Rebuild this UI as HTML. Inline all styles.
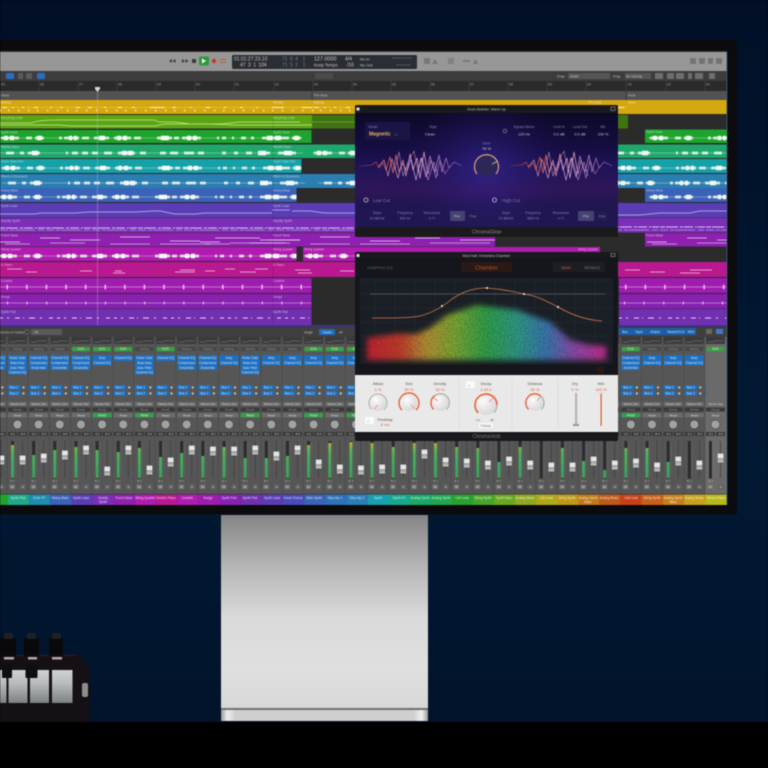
<!DOCTYPE html>
<html><head><meta charset="utf-8"><title>Logic Pro mixer on display</title>
<style>
html,body{margin:0;padding:0;background:#000;width:768px;height:768px;overflow:hidden}
svg#r{display:block;filter:blur(.55px);font-family:"Liberation Sans",sans-serif}
.t{fill:#fff;fill-opacity:.6;font-size:3.2px}
.d{fill:#ddd;font-size:3px;text-anchor:middle}
.l{fill:#fff;fill-opacity:.8;font-size:3.2px;text-anchor:middle}
.o{fill:#e8603a;font-size:4px;text-anchor:middle}
.pg{fill:#8583ae;font-size:3.3px;text-anchor:middle}
.pw{fill:#c9c3e8;font-size:3.8px;text-anchor:middle}
</style></head><body>
<svg id="r" xmlns="http://www.w3.org/2000/svg" width="768" height="768" viewBox="0 0 768 768">
<defs>
<linearGradient id="bg" x1="0" y1="0" x2="0" y2="1"><stop offset="0" stop-color="#011027"/><stop offset=".6" stop-color="#021933"/><stop offset="1" stop-color="#01132a"/></linearGradient>
<linearGradient id="st" x1="0" y1="0" x2="0" y2="1"><stop offset="0" stop-color="#858585"/><stop offset=".27" stop-color="#b6b6b6"/><stop offset=".53" stop-color="#dadada"/><stop offset=".8" stop-color="#dfdfdf"/><stop offset="1" stop-color="#d8d8d8"/></linearGradient>
<linearGradient id="band" x1="0" y1="0" x2="1" y2="0"><stop offset="0" stop-color="#999"/><stop offset=".03" stop-color="#eee"/><stop offset=".07" stop-color="#cfcfcf"/><stop offset=".93" stop-color="#cfcfcf"/><stop offset=".97" stop-color="#f2f2f2"/><stop offset="1" stop-color="#999"/></linearGradient>
<linearGradient id="mt" gradientUnits="userSpaceOnUse" x1="0" y1="442" x2="0" y2="478"><stop offset="0" stop-color="#b8b038"/><stop offset=".3" stop-color="#4cb05c"/><stop offset="1" stop-color="#3ca05c"/></linearGradient>
<linearGradient id="fd" x1="0" y1="0" x2="0" y2="1"><stop offset="0" stop-color="#d8d8d8"/><stop offset=".45" stop-color="#f0f0f0"/><stop offset=".55" stop-color="#9a9a9a"/><stop offset="1" stop-color="#cacaca"/></linearGradient>
<linearGradient id="pp" x1="0" y1="0" x2="0" y2="1"><stop offset="0" stop-color="#0c0926"/><stop offset=".3" stop-color="#150e42"/><stop offset=".5" stop-color="#211459"/><stop offset=".68" stop-color="#2e1658"/><stop offset=".8" stop-color="#211550"/><stop offset="1" stop-color="#1f1852"/></linearGradient>
<radialGradient id="pr" gradientUnits="userSpaceOnUse" cx="486" cy="168" r="80"><stop offset="0" stop-color="#3c2aa8" stop-opacity=".55"/><stop offset="1" stop-color="#2a1868" stop-opacity="0"/></radialGradient>
<linearGradient id="wg" gradientUnits="userSpaceOnUse" x1="360" y1="0" x2="462" y2="0"><stop offset="0" stop-color="#5a2d50"/><stop offset=".3" stop-color="#d85a4a"/><stop offset=".6" stop-color="#e098b8"/><stop offset="1" stop-color="#6a48a8"/></linearGradient>
<linearGradient id="wh" gradientUnits="userSpaceOnUse" x1="360" y1="0" x2="462" y2="0"><stop offset="0" stop-color="#d85a4a"/><stop offset=".5" stop-color="#d0a8e0"/><stop offset="1" stop-color="#8a4090"/></linearGradient>
<linearGradient id="rb" gradientUnits="userSpaceOnUse" x1="367" y1="0" x2="606" y2="0"><stop offset="0" stop-color="#cc2030"/><stop offset=".14" stop-color="#c83c2a"/><stop offset=".25" stop-color="#b89530"/><stop offset=".36" stop-color="#80aa30"/><stop offset=".5" stop-color="#2ea348"/><stop offset=".63" stop-color="#2e9c88"/><stop offset=".75" stop-color="#3878b4"/><stop offset=".86" stop-color="#884cac"/><stop offset="1" stop-color="#cc2890"/></linearGradient>
<linearGradient id="ky" x1="0" y1="0" x2="0" y2="1"><stop offset="0" stop-color="#cfd3d3"/><stop offset=".4" stop-color="#b8bcbc"/><stop offset="1" stop-color="#7c8282"/></linearGradient>
<radialGradient id="kn" cx=".35" cy=".3" r=".8"><stop offset="0" stop-color="#fbfbfb"/><stop offset="1" stop-color="#d4d4d4"/></radialGradient>
<filter id="sp" x="-10%" y="-15%" width="120%" height="130%"><feGaussianBlur in="SourceGraphic" stdDeviation="3" result="b"/><feTurbulence type="fractalNoise" baseFrequency="1.1" numOctaves="2" seed="4" result="n"/><feColorMatrix in="n" type="matrix" values="0 0 0 0 0 0 0 0 0 0 0 0 0 0 0 0 0 0 -2.2 2.05" result="a"/><feComposite in="b" in2="a" operator="in"/></filter>

<g id="wv" fill="none">
<path d="M0 0H303" stroke="#e9f5ea" stroke-width=".6" stroke-opacity=".7"/>
<path d="M2 0H20M27 0H33M36 0H45M60 0H63M65 0H80M83 0H90M95 0H110M115 0H132M135 0H142M158 0H173M175 0H180M183 0H202M218 0H220M223 0H227M233 0H235M242 0H247M252 0H255M263 0H290M293 0H302" stroke="#e6f3e8" stroke-opacity=".9" stroke-width="2.800"/>
<path d="M5 0H9M11 0H15M38 0H43M70 0H73M75 0H78M100 0H106M118 0H122M124 0H128M162 0H170M188 0H192M194 0H198M268 0H274M276 0H282M295 0H300" stroke="#f4fbf5" stroke-width="4.400"/>
</g>
<g id="wv2" fill="none">
<path d="M0 0H303" stroke="#eee" stroke-width=".6" stroke-opacity=".7"/>
<path d="M6 0H14M20 0H24M28 0H40M66 0H68M72 0H78M82 0H88M92 0H98M104 0H112M118 0H135M140 0H146M160 0H166M170 0H178M184 0H194M198 0H204M222 0H226M234 0H238M246 0H252M258 0H270M278 0H296" stroke="#eef3fa" stroke-opacity=".9" stroke-width="2.800"/>
<path d="M32 0H38M122 0H127M128 0H133M258 0H266M284 0H292" stroke="#f8f8ff" stroke-width="4.400"/>
</g>
<g id="yl" fill="none" stroke="#fff3c8">
<path d="M0 0H315" stroke-width=".5" stroke-opacity=".5"/>
<path d="M2 0H7M12 0H14M22 0H24M34 0H38M50 0H52M60 0H63M76 0H80M88 0H92M104 0H106M118 0H122M132 0H135M150 0H165M172 0H176M190 0H192M206 0H210M224 0H226M240 0H243M256 0H258M272 0H284M302 0H312" stroke-width="1"/>
<path d="M0 3h1.300M8 3h1.300M18 3h1.300M28 3h1.300M37 3h1.300M47 3h1.300M57 3h1.300M67 3h1.300M76 3h1.300M86 3h1.300M96 3h1.300M106 3h1.300M116 3h1.300M125 3h1.300M135 3h1.300M145 3h1.300M155 3h1.300M165 3h1.300M174 3h1.300M184 3h1.300M194 3h1.300M204 3h1.300M214 3h1.300M223 3h1.300M233 3h1.300M243 3h1.300M253 3h1.300M263 3h1.300M272 3h1.300M282 3h1.300M292 3h1.300M302 3h1.300" stroke-width="1.600"/>
</g>
<g id="md" fill="none" stroke="#e6d8f5" stroke-width=".7">
<path d="M0 2H20M40 -2H60M70 0H100M120 -3H150M170 1H200M215 -2H240M260 0H300"/>
<path d="M5 4H30M50 3H85M110 4H150M160 4H210M230 3H290" stroke-opacity=".8"/>
</g>
<g id="f"><rect x="2.200" y="-4.500" width="5.800" height="9" rx=".6" fill="url(#fd)"/></g>

<g id="s">
<rect x="-9.500" y="337" width="19" height="7" fill="#3a3a3a"/><path d="M-8 342H-3Q0 340 3 341H8" stroke="#9a9a9a" stroke-width=".4" fill="none"/>
<rect x="-9" y="347" width="18" height="4" rx=".5" fill="#474747"/><text class="d" y="350" fill-opacity=".5">Setting</text>
<rect x="-10" y="385" width="13" height="4.600" rx=".6" fill="#1f6fc0"/><rect x="-10" y="391" width="13" height="4.600" rx=".6" fill="#1f6fc0"/>
<text class="l" x="-3.500" y="388.400">Bus 1</text><text class="l" x="-3.500" y="394.400">Bus 2</text>
<circle cx="6" cy="387.500" r="1.200" fill="#bbb"/><circle cx="6" cy="393.500" r="1.200" fill="#bbb"/>
<rect x="-9.500" y="402" width="19" height="4" fill="#6b6b6b"/><text class="d" y="405">Stereo Out</text>
<rect x="-9.500" y="407.500" width="19" height="4" fill="#3a3a3a"/><text class="d" y="410.500" fill-opacity=".6">Group</text>
<rect x="-9.500" y="413" width="19" height="4.400" fill="#6c6c6c"/><text class="d" y="416.300">Read</text>
<circle cy="424.500" r="4" fill="#a2a2a2"/><circle cy="424.500" r="4.600" fill="none" stroke="#444" stroke-width=".5"/>
<rect x="-9.500" y="432" width="9" height="4" fill="#383838"/><rect x=".5" y="432" width="9" height="4" fill="#383838"/>
<text class="d" x="-5" y="435">-3.1</text><text class="d" x="5" y="435">-9.4</text>
<rect x="-6.500" y="441" width="3" height="37.500" fill="#2c2c2c"/>
<path d="M-2.200 443v34" stroke="#8c8c8c" stroke-width="1" stroke-dasharray=".4 1.600"/>
<rect x="4.700" y="441" width=".7" height="37" fill="#3c3c3c"/>
<text class="d" x="-5" y="482">II .I</text>
<rect x="-8" y="484.500" width="5.500" height="4.500" rx=".5" fill="#767676"/><rect x="2.500" y="484.500" width="5.500" height="4.500" rx=".5" fill="#626262"/>
<text class="d" x="-5.200" y="488">M</text><text class="d" x="5.200" y="488">S</text>
<path d="M-10.500 337V494" stroke="#474747" stroke-width=".5"/>
</g>
<g id="p1"><rect x="-9.500" y="355" width="19" height="6" rx=".5" fill="#1f6fc0"/><text class="l" y="359">Channel EQ</text></g>
<g id="p2"><rect x="-9.500" y="355" width="19" height="10.500" rx=".5" fill="#1f6fc0"/><text class="l" y="359">Amp</text><text class="l" y="364">Channel EQ</text></g>
<g id="p3"><rect x="-9.500" y="355" width="19" height="15" rx=".5" fill="#1f6fc0"/><text class="l" y="359">Channel EQ</text><text class="l" y="364">Compressor</text><text class="l" y="369">Ensemble</text></g>
<g id="p4"><rect x="-9.500" y="355" width="19" height="19.500" rx=".5" fill="#1f6fc0"/><text class="l" y="359">Noise Gate</text><text class="l" y="364">Bass Amp</text><text class="l" y="369">Auto Filter</text><text class="l" y="373.500">Channel EQ</text></g>
<g id="gt"><rect x="-9" y="347" width="18" height="4.200" rx=".5" fill="#3aa144"/><text class="l" y="350.200">EXS</text></g>
<g id="gr"><rect x="-9.500" y="413" width="19" height="4.400" fill="#34a04a"/><text class="l" y="416.300">Read</text></g>
</defs>

<rect width="768" height="768" fill="url(#bg)"/>
<!-- stand -->
<rect x="221" y="515" width="207" height="193" fill="url(#st)"/>
<rect x="221" y="708" width="207" height="2" fill="#6f6f6f"/>
<rect x="221" y="710" width="207" height="11" fill="url(#band)"/>
<rect y="722" width="768" height="46" fill="#000"/>
<!-- keyboard -->
<g>
<path d="M0 655H78Q90 660 90 682V722H0Z" fill="#141016"/>
<path d="M0 655.500H76" stroke="#35182a" stroke-width="1.200"/>
<rect x="0" y="638" width="16" height="18" fill="#09090b"/><rect x="24" y="638" width="15" height="18" fill="#09090b"/><rect x="49" y="638" width="14" height="18" fill="#09090b"/>
<rect x="4" y="633" width="9" height="6" rx="1.500" fill="#202024"/><rect x="27" y="633" width="9" height="6" rx="1.500" fill="#202024"/><rect x="52" y="633" width="9" height="6" rx="1.500" fill="#202024"/>
<rect x="4" y="657" width="10" height="2.500" fill="#b8a4aa"/><rect x="28" y="657" width="9" height="2.500" fill="#b8a4aa"/><rect x="52" y="657" width="10" height="2.500" fill="#b8a4aa"/>
<rect x="0" y="670" width="6.500" height="33" fill="url(#ky)"/><rect x="8.500" y="670" width="19" height="33" fill="url(#ky)"/><rect x="30" y="670" width="19" height="33" fill="url(#ky)"/><rect x="52" y="670" width="20.500" height="33" fill="url(#ky)"/>
<rect x="2" y="664" width="10" height="14" rx="1" fill="#0e0e10"/><rect x="25.500" y="664" width="12" height="14" rx="1" fill="#0e0e10"/>
<rect x="82" y="683" width="6" height="14" rx="2" fill="#8f8f8a"/>
</g>

<!-- monitor -->
<rect x="-2" y="40" width="739" height="474.500" fill="#0b0b0d"/>
<rect x="0" y="51" width="727" height="1" fill="#3a3a3a"/>
<rect x="0" y="52" width="727" height="453" fill="#2c2c2c"/>
<rect x="726.400" y="52" width=".9" height="453" fill="#4a7ab0" fill-opacity=".7"/>

<!-- toolbar -->
<rect y="52" width="726.500" height="19" fill="#979797"/>
<g fill="#3c3c3c">
<path d="M172 59v4l-3-2zM175.500 59v4l-3-2z"/><path d="M182 59v4l3-2zM185.500 59v4l3-2z"/><rect x="192" y="59" width="4" height="4"/>
</g>
<rect x="199" y="56.500" width="10" height="9" rx="2" fill="#2c9a3a"/><path d="M202 58.500v5l4-2.500z" fill="#fff"/>
<circle cx="214" cy="61" r="2.200" fill="#c9382c"/>
<path d="M220 59.500h6M220 62.500h6" stroke="#b8602a" stroke-width=".9"/>
<rect x="232" y="55" width="185" height="14" rx="1.500" fill="#2a2d33"/>
<g fill="#c9c9c9" font-size="5">
<text x="234" y="60.500">01:01:27:23.10</text><text x="240" y="66.500">47&#8201; 3&#8201; 1&#8201; 104</text>
<text x="282" y="60.500" fill-opacity=".5">71&#8201; 5&#8201; 4&#8201; &#8201; 1</text><text x="282" y="66.500" fill-opacity=".5">71&#8201; 5&#8201; 2&#8201; &#8201; 1</text>
<text x="314" y="60.500" font-size="5.400">127.0000</text><text x="314" y="66.500" font-size="4.200">Keep Tempo</text>
<text x="345" y="60.500">4/4</text><text x="347" y="66.500">/16</text>
<text x="360" y="60.500" font-size="4">No In</text><text x="360" y="66.500" font-size="4">No Out</text>
</g>
<path d="M392 58h20M396 65h14" stroke="#777" stroke-width=".7" stroke-dasharray="2 1"/>
<g fill="#777"><rect x="424" y="58" width="6" height="6" rx="1"/><path d="M432 64l3-5 3 5z"/><rect x="448" y="58" width="6" height="6" fill-opacity=".7"/><rect x="463" y="60" width="7" height="2"/><path d="M473 64l2.500-5 2.500 5z"/></g>
<g fill="#747474"><rect x="690" y="58" width="6" height="6"/><rect x="699" y="58" width="6" height="6"/><rect x="708" y="58" width="5" height="6"/><rect x="716" y="58" width="6" height="6"/></g>

<!-- control bar -->
<rect y="71" width="726.500" height="10" fill="#3c3c3c"/>
<rect x="6" y="73" width="8" height="6" rx="1" fill="#2a6ec0"/><rect x="18" y="73" width="5" height="6" fill="#5a5a5a"/><rect x="26" y="73" width="6" height="6" fill="#5a5a5a"/><rect x="37" y="73" width="8" height="6" rx="1" fill="#2a6ec0"/>
<rect x="315" y="73" width="18" height="6" rx="1" fill="#4a4a4a"/>
<text class="t" x="557" y="77.500">Snap:</text><rect x="568" y="73" width="42" height="6" fill="#555"/><text class="t" x="570" y="77.500">Smart</text>
<text class="t" x="613" y="77.500">Drag:</text><rect x="625" y="73" width="26" height="6" fill="#555"/><text class="t" x="626" y="77.500">No Overlap</text>
<g fill="#6e6e6e"><rect x="655" y="73" width="8" height="6"/><rect x="667" y="73" width="7" height="6"/><rect x="676" y="73" width="8" height="6"/><rect x="688" y="73" width="4" height="6"/><rect x="695" y="73" width="8" height="6"/><rect x="709" y="73" width="6" height="6"/></g>

<!-- ruler -->
<rect y="81" width="726.500" height="10" fill="#2a2a2a"/>
<g fill="#999" font-size="3.600">
<text x="1" y="85.500">45</text><text x="40" y="85.500">46</text><text x="79" y="85.500">47</text><text x="118" y="85.500">48</text><text x="157" y="85.500">49</text><text x="196" y="85.500">50</text><text x="235" y="85.500">51</text><text x="275" y="85.500">52</text><text x="314" y="85.500">53</text><text x="353" y="85.500">54</text><text x="392" y="85.500">55</text><text x="431" y="85.500">56</text><text x="470" y="85.500">57</text><text x="509" y="85.500">58</text><text x="548" y="85.500">59</text><text x="587" y="85.500">60</text><text x="628" y="85.500">61</text><text x="667" y="85.500">62</text><text x="706" y="85.500">63</text>
</g>
<path d="M39 81v10M78 81v10M117 81v10M156 81v10M195 81v10M234 81v10M274 81v10M313 81v10M352 81v10M391 81v10M430 81v10M469 81v10M508 81v10M547 81v10M586 81v10M626 81v10M666 81v10M705 81v10" stroke="#4a4a4a" stroke-width=".6"/>

<!-- markers -->
<rect y="91" width="726.500" height="9" fill="#525252"/>
<text class="t" x="1" y="96.500">Verse</text><text class="t" x="314" y="96.500">Pre Hook</text><text class="t" x="628" y="96.500">Hook</text>
<path d="M312 91v9M626 91v9" stroke="#222" stroke-width=".5"/>

<!-- tracks -->
<rect y="100" width="726.500" height="226" fill="#2b2b2b"/>
<svg x="0" y="100" width="726.500" height="14"><rect width="727" height="14" fill="#d6a80f"/><use href="#yl" x="0" y="7.500"/><use href="#yl" x="312" y="7.500"/><text class="t" x="1" y="3.500">Melody</text><text class="t" x="273" y="3.500">Melody</text><text class="t" x="314" y="3.500">Melody</text><text class="t" x="588" y="3.500">Pre Hook</text><text class="t" x="628" y="3.500">Hook</text></svg>
<svg x="0" y="115" width="312" height="13.500"><rect width="312" height="14" fill="#5ba513"/><path d="M0 8H32Q36 5 60 5H155L158 7H175L190 9H220L240 7H300M0 10H60L70 11H155L165 9H210L235 10H312" stroke="#c8e896" stroke-width=".7" fill="none"/><text class="t" x="1" y="4">Morphing Lead</text><text class="t" x="273" y="4">Morphing Lead</text></svg>
<rect x="312" y="115" width="316" height="13.500" fill="#3f7410"/>
<path d="M312 122H354" stroke="#8ab860" stroke-width=".5"/>

<svg x="0" y="130" width="311.500" height="13"><rect width="312" height="13" fill="#1ea32d"/><use href="#wv" x="-1" y="8"/><text class="t" x="1" y="3.500">Synth Hook</text><text class="t" x="273" y="3.500">Synth Hook</text></svg>
<svg x="645" y="129.500" width="82" height="13.500"><rect width="82" height="14" fill="#1ea32d"/><use href="#wv" x="3" y="8.500"/><text class="t" x="1" y="3.500">Synth Hook</text></svg>

<svg x="0" y="144.500" width="726.500" height="13.500"><rect width="727" height="14" fill="#1ea86a"/><use href="#wv2" x="0" y="8.500"/><use href="#wv" x="312" y="8.500"/><use href="#wv2" x="610" y="8.500"/><text class="t" x="1" y="3.500">Warble Bass</text><text class="t" x="273" y="3.500">Warble Bass</text></svg>

<svg x="0" y="159" width="301.500" height="14"><rect width="302" height="14" fill="#16a0a8"/><use href="#wv" x="0" y="9"/><text class="t" x="1" y="3.500">Super Saw Pad</text><text class="t" x="273" y="3.500">Super Saw Pad</text></svg>
<svg x="618" y="159" width="108.500" height="14"><rect width="110" height="14" fill="#16a0a8"/><use href="#wv" x="-2" y="9"/></svg>

<svg x="0" y="174" width="726.500" height="14"><rect width="727" height="14" fill="#2a7eb0"/><use href="#wv2" x="2" y="9"/><use href="#wv2" x="318" y="9"/><use href="#wv" x="610" y="9"/><text class="t" x="1" y="3.500">Risers &amp; Bouncers</text><text class="t" x="273" y="3.500">Risers &amp; Bouncers</text></svg>

<svg x="0" y="188" width="296.500" height="14"><rect width="297" height="14" fill="#3a62b8"/><use href="#wv" x="-3" y="9"/><text class="t" x="1" y="3.500">Heavy Bass</text><text class="t" x="273" y="3.500">Heavy Bass</text></svg>
<svg x="645" y="188" width="81.500" height="14"><rect width="82" height="14" fill="#3a62b8"/><use href="#wv" x="3" y="9"/><text class="t" x="1" y="3.500">Heavy Bass</text></svg>

<svg x="0" y="203" width="726.500" height="14.500"><rect width="727" height="15" fill="#5a3cb5"/><path d="M0 11H35L40 10H75L90 9H135L155 8H160L175 11H195L205 10H272M272 7H290M292 8H310L325 10H390M610 12H640L660 10H690L700 8H727" stroke="#c8bdf0" stroke-width=".7" fill="none"/><text class="t" x="1" y="4">Synth Lead</text><text class="t" x="273" y="4">Synth Lead</text></svg>
<svg x="0" y="218" width="726.500" height="14.500"><rect width="727" height="15" fill="#7b2fb8"/><path d="M0 10H354M614 9H727" stroke="#dcc5f0" stroke-width=".9" stroke-dasharray="5 1 12 2 3 1 9 2 2 1 7 1"/><path d="M0 12H354M614 12H727" stroke="#dcc5f0" stroke-width=".6" stroke-dasharray="8 2 4 1 20 3 6 2"/><text class="t" x="1" y="4">Gravity Synth</text><text class="t" x="273" y="4">Gravity Synth</text></svg>

<svg x="0" y="233" width="495" height="13.500"><rect width="495" height="14" fill="#8f20b0"/><use href="#md" x="0" y="7"/><use href="#md" x="200" y="7"/><text class="t" x="1" y="3.500">Punch Bass</text><text class="t" x="273" y="3.500">Punch Bass</text></svg>
<svg x="645" y="233" width="81.500" height="13.500"><rect width="82" height="14" fill="#8f20b0"/><use href="#md" x="2" y="7"/><text class="t" x="1" y="3.500">Punch Bass</text></svg>

<svg x="0" y="247" width="296.500" height="14"><rect width="297" height="14" fill="#b01bb0"/><use href="#wv" x="-3" y="9"/><text class="t" x="1" y="3.500">String Quartet</text><text class="t" x="273" y="3.500">String Quartet</text></svg>
<svg x="303" y="247" width="297" height="14"><rect width="297" height="14" fill="#b01bb0"/><use href="#wv" x="0" y="9"/><text class="t" x="1" y="3.500">String Quartet</text><text class="t" x="275" y="3.500">String Quartet</text></svg>

<svg x="0" y="262" width="726.500" height="15"><rect width="727" height="15" fill="#b81890"/><path d="M7 7H22M26 10H37M80 9H92M113 11H125M115 9H122M175 10H195M180 8H195M205 9H215M225 7H235M240 10H256M255 7H268M298 11H312M295 8H310M340 9H354M625 8H640M650 10H665M680 11H700M690 8H712" stroke="#f4cde6" stroke-width=".8" fill="none"/><text class="t" x="1" y="4">E-Piano</text><text class="t" x="273" y="4">E-Piano</text></svg>

<svg x="0" y="278" width="311.500" height="15"><rect width="312" height="15" fill="#a01cb0"/><path d="M0 9H312" stroke="#eec8f0" stroke-width=".5"/><path d="M0 9H312" stroke="#eec8f0" stroke-width="4.500" stroke-dasharray="1.500 18.100" stroke-dashoffset="-6.500"/><text class="t" x="1" y="4">Cowbell</text><text class="t" x="273" y="4">Cowbell</text></svg>
<svg x="619" y="278" width="107.500" height="15"><rect width="108" height="15" fill="#a01cb0"/><path d="M0 9H108" stroke="#eec8f0" stroke-width=".5"/><path d="M0 9H108" stroke="#eec8f0" stroke-width="4.500" stroke-dasharray="1.500 18.100" stroke-dashoffset="-6"/></svg>
<svg x="0" y="294" width="311.500" height="14.500"><rect width="312" height="15" fill="#8820b0"/><path d="M0 9H312" stroke="#e8c8f0" stroke-width=".5"/><path d="M0 9H312" stroke="#e8c8f0" stroke-width="3" stroke-dasharray="1 18.600" stroke-dashoffset="-7"/><text class="t" x="1" y="4">Songs</text><text class="t" x="273" y="4">Songs</text></svg>
<svg x="619" y="294" width="107.500" height="14.500"><rect width="108" height="15" fill="#8820b0"/><path d="M0 9H108" stroke="#e8c8f0" stroke-width=".5"/><path d="M0 9H108" stroke="#e8c8f0" stroke-width="3" stroke-dasharray="1 18.600" stroke-dashoffset="-5"/></svg>
<svg x="0" y="309" width="311.500" height="16"><rect width="312" height="16" fill="#7030b0"/><path d="M0 9H312" stroke="#e6d4f5" stroke-width=".9" stroke-dasharray="3 4 2 6 5 3 1 5 6 5 2 7 4 4"/><text class="t" x="1" y="4">Synth Pad</text><text class="t" x="273" y="4">Synth Pad</text></svg>
<svg x="619" y="309" width="107.500" height="16"><rect width="108" height="16" fill="#7030b0"/><path d="M0 9H108" stroke="#e6d4f5" stroke-width=".9" stroke-dasharray="3 4 2 6 5 3 1 5 6 5 2 7 4 4"/></svg>
<path d="M273 115V325" stroke="#000" stroke-opacity=".2" stroke-width=".5"/>
<path d="M97.500 88V326" stroke="#c8c8c8" stroke-opacity=".5" stroke-width=".7"/>
<path d="M95 87h5v2l-2.500 3-2.500-3z" fill="#d4d4d4"/>
<rect y="325" width="726.500" height="1.600" fill="#46309a"/>

<!-- mixer -->
<rect y="327" width="726.500" height="167" fill="#565656"/>
<rect y="327" width="726.500" height="10" fill="#3f3f3f"/>
<text class="t" x="0" y="333.500">Sends on Faders:</text><circle cx="27" cy="332" r="2.300" fill="none" stroke="#888" stroke-width=".5"/>
<rect x="31" y="329" width="31" height="6" rx="1" fill="#5a5a5a"/><text class="t" x="34" y="333.500">Off</text>
<text class="t" x="304" y="333.500">Single</text><rect x="319" y="329" width="16" height="6" rx="1" fill="#1f6fc0"/><text class="l" x="327" y="333.500">Tracks</text><text class="t" x="339" y="333.500">All</text>
<rect x="619" y="328" width="77" height="7" fill="#1c5fa8"/>
<g><text class="l" x="625" y="333">Bus</text><text class="l" x="639" y="333">Input</text><text class="l" x="655" y="333">Output</text><text class="l" x="676" y="333">Master/VCA</text><text class="l" x="691" y="333">MIDI</text></g>
<rect x="706" y="329" width="6" height="5" fill="#6a6a5a"/><rect x="716" y="329" width="7" height="5" fill="#3a7cc8"/>
<rect x="705" y="337" width="21.500" height="157" fill="#6a6a6a"/>

<!-- strips -->
<g transform="translate(-3.650 0)"><use href="#s"/><use href="#p3"/><rect x="-6.500" y="445" width="3" height="33" fill="url(#mt)"/><use href="#f" y="460"/></g>
<g transform="translate(17.500 0)"><use href="#s"/><use href="#p4"/><rect x="-6.500" y="445" width="3" height="33" fill="url(#mt)"/><use href="#f" y="460"/></g>
<g transform="translate(38.650 0)"><use href="#s"/><use href="#p3"/><rect x="-6.500" y="455" width="3" height="23" fill="url(#mt)"/><use href="#f" y="458"/></g>
<g transform="translate(59.800 0)"><use href="#s"/><use href="#p3"/><rect x="-6.500" y="450" width="3" height="28" fill="url(#mt)"/><use href="#f" y="455"/></g>
<g transform="translate(80.950 0)"><use href="#s"/><use href="#gt"/><use href="#p3"/><rect x="-6.500" y="447" width="3" height="31" fill="url(#mt)"/><use href="#f" y="450"/></g>
<g transform="translate(102.100 0)"><use href="#s"/><use href="#gt"/><use href="#p2"/><use href="#gr"/><rect x="-6.500" y="450" width="3" height="28" fill="url(#mt)"/><use href="#f" y="471"/></g>
<g transform="translate(123.250 0)"><use href="#s"/><use href="#gt"/><use href="#p1"/><rect x="-6.500" y="452" width="3" height="26" fill="url(#mt)"/><use href="#f" y="450"/></g>
<g transform="translate(144.400 0)"><use href="#s"/><use href="#p4"/><use href="#gr"/><rect x="-6.500" y="448" width="3" height="30" fill="url(#mt)"/><use href="#f" y="470"/></g>
<g transform="translate(165.550 0)"><use href="#s"/><use href="#gt"/><use href="#p1"/><rect x="-6.500" y="457" width="3" height="21" fill="url(#mt)"/><use href="#f" y="462"/></g>
<g transform="translate(186.700 0)"><use href="#s"/><use href="#p3"/><rect x="-6.500" y="453" width="3" height="25" fill="url(#mt)"/><use href="#f" y="450"/></g>
<g transform="translate(207.850 0)"><use href="#s"/><use href="#p3"/><rect x="-6.500" y="456" width="3" height="22" fill="url(#mt)"/><use href="#f" y="451"/></g>
<g transform="translate(229 0)"><use href="#s"/><use href="#p2"/><rect x="-6.500" y="447" width="3" height="31" fill="url(#mt)"/><use href="#f" y="451"/></g>
<g transform="translate(250.150 0)"><use href="#s"/><use href="#p4"/><use href="#gr"/><rect x="-6.500" y="458" width="3" height="20" fill="url(#mt)"/><use href="#f" y="450"/></g>
<g transform="translate(271.300 0)"><use href="#s"/><use href="#p2"/><rect x="-6.500" y="458" width="3" height="20" fill="url(#mt)"/><use href="#f" y="456"/></g>
<g transform="translate(292.450 0)"><use href="#s"/><use href="#p2"/><rect x="-6.500" y="456" width="3" height="22" fill="url(#mt)"/><use href="#f" y="450"/></g>
<g transform="translate(313.600 0)"><use href="#s"/><use href="#gt"/><use href="#p2"/><use href="#gr"/><rect x="-6.500" y="445" width="3" height="33" fill="url(#mt)"/><use href="#f" y="464"/></g>
<g transform="translate(334.750 0)"><use href="#s"/><use href="#gt"/><use href="#p2"/><rect x="-6.500" y="443" width="3" height="35" fill="url(#mt)"/><use href="#f" y="469"/></g>
<g transform="translate(355.900 0)"><use href="#s"/><use href="#gt"/><use href="#p2"/><use href="#gr"/><rect x="-6.500" y="442" width="3" height="36" fill="url(#mt)"/><use href="#f" y="470"/></g>
<g transform="translate(377.050 0)"><use href="#s"/><rect x="-6.500" y="443" width="3" height="35" fill="url(#mt)"/><use href="#f" y="469"/></g>
<g transform="translate(398.200 0)"><use href="#s"/><rect x="-6.500" y="447" width="3" height="31" fill="url(#mt)"/><use href="#f" y="469"/></g>
<g transform="translate(419.350 0)"><use href="#s"/><rect x="-6.500" y="443" width="3" height="35" fill="url(#mt)"/><use href="#f" y="454"/></g>
<g transform="translate(440.500 0)"><use href="#s"/><rect x="-6.500" y="443" width="3" height="35" fill="url(#mt)"/><use href="#f" y="462"/></g>
<g transform="translate(461.650 0)"><use href="#s"/><rect x="-6.500" y="447" width="3" height="31" fill="url(#mt)"/><use href="#f" y="463"/></g>
<g transform="translate(482.800 0)"><use href="#s"/><rect x="-6.500" y="448" width="3" height="30" fill="url(#mt)"/><use href="#f" y="465"/></g>
<g transform="translate(503.950 0)"><use href="#s"/><rect x="-6.500" y="462" width="3" height="16" fill="url(#mt)"/><use href="#f" y="461"/></g>
<g transform="translate(525.100 0)"><use href="#s"/><rect x="-6.500" y="447" width="3" height="31" fill="url(#mt)"/><use href="#f" y="465"/></g>
<g transform="translate(546.250 0)"><use href="#s"/><use href="#f" y="467"/></g>
<g transform="translate(567.400 0)"><use href="#s"/><rect x="-6.500" y="448" width="3" height="30" fill="url(#mt)"/><use href="#f" y="467"/></g>
<g transform="translate(588.550 0)"><use href="#s"/><rect x="-6.500" y="461" width="3" height="17" fill="url(#mt)"/><use href="#f" y="461"/></g>
<g transform="translate(609.700 0)"><use href="#s"/><rect x="-6.500" y="470" width="3" height="8" fill="url(#mt)"/><use href="#f" y="465"/></g>
<g transform="translate(630.850 0)"><use href="#s"/><use href="#gt"/><use href="#p3"/><use href="#gr"/><rect x="-6.500" y="448" width="3" height="30" fill="url(#mt)"/><use href="#f" y="463"/></g>
<g transform="translate(652 0)"><use href="#s"/><use href="#p2"/><rect x="-6.500" y="448" width="3" height="30" fill="url(#mt)"/><use href="#f" y="467"/></g>
<g transform="translate(673.150 0)"><use href="#s"/><use href="#p2"/><rect x="-6.500" y="462" width="3" height="16" fill="url(#mt)"/><use href="#f" y="461"/></g>
<g transform="translate(694.300 0)"><use href="#s"/><use href="#p2"/><use href="#f" y="465"/></g>
<g transform="translate(715.450 0)"><use href="#s"/><use href="#gt"/><rect x="-9" y="385" width="19" height="12" fill="#6a6a6a"/><use href="#f" y="458"/></g>

<!-- channel labels -->
<g>
<rect x="-2" y="494.500" width="10" height="10.500" fill="#1ea32d"/>
<rect x="8" y="494.500" width="21.150" height="10.500" fill="#1fa88a"/><text class="l" x="18" y="499">Synth Pad</text>
<rect x="29.150" y="494.500" width="21.150" height="10.500" fill="#1f8cb0"/><text class="l" x="39" y="499">Choir FX</text>
<rect x="50.300" y="494.500" width="21.150" height="10.500" fill="#3a62b8"/><text class="l" x="60" y="499">Heavy Bass</text>
<rect x="71.450" y="494.500" width="21.150" height="10.500" fill="#5a3cb5"/><text class="l" x="81" y="499">Synth Lead</text>
<rect x="92.600" y="494.500" width="21.150" height="10.500" fill="#7b2fb8"/><text class="l" x="103" y="499">Gravity</text><text class="l" x="103" y="503">Synth</text>
<rect x="113.750" y="494.500" width="21.150" height="10.500" fill="#8f20b0"/><text class="l" x="124" y="499">Punch Bass</text>
<rect x="134.900" y="494.500" width="21.150" height="10.500" fill="#b01bb0"/><text class="l" x="145" y="499">String Quartet</text>
<rect x="156.050" y="494.500" width="21.150" height="10.500" fill="#b81890"/><text class="l" x="166" y="499">Electric Piano</text>
<rect x="177.200" y="494.500" width="21.150" height="10.500" fill="#b01bb0"/><text class="l" x="187" y="499">Cowbell</text>
<rect x="198.350" y="494.500" width="21.150" height="10.500" fill="#a01cb0"/><text class="l" x="208" y="499">Songs</text>
<rect x="219.500" y="494.500" width="21.150" height="10.500" fill="#8820b0"/><text class="l" x="229" y="499">Synth Pad</text>
<rect x="240.650" y="494.500" width="21.150" height="10.500" fill="#7030b0"/><text class="l" x="250" y="499">Synth Pad</text>
<rect x="261.800" y="494.500" width="21.150" height="10.500" fill="#5a3cb5"/><text class="l" x="272" y="499">Synth Lead</text>
<rect x="282.950" y="494.500" width="21.150" height="10.500" fill="#4a4ab8"/><text class="l" x="293" y="499">Vocal Chorus</text>
<rect x="304.100" y="494.500" width="21.150" height="10.500" fill="#3a62b8"/><text class="l" x="314" y="499">Slide Synth</text>
<rect x="325.250" y="494.500" width="21.150" height="10.500" fill="#2f70b8"/><text class="l" x="335" y="499">Step Arp 1</text>
<rect x="346.400" y="494.500" width="21.600" height="10.500" fill="#2a7eb8"/><text class="l" x="357" y="499">Step Arp 2</text>
<rect x="368" y="494.500" width="21" height="10.500" fill="#1aa0b0"/><text class="l" x="378" y="499">Synth</text>
<rect x="389" y="494.500" width="21" height="10.500" fill="#18a890"/><text class="l" x="399" y="499">Synth FX</text>
<rect x="410" y="494.500" width="21" height="10.500" fill="#1aa868"/><text class="l" x="420" y="499">Analog Synth</text>
<rect x="431" y="494.500" width="21" height="10.500" fill="#20a850"/><text class="l" x="441" y="499">Analog Synth</text>
<rect x="452" y="494.500" width="21" height="10.500" fill="#28a030"/><text class="l" x="462" y="499">Cell Lead</text>
<rect x="473" y="494.500" width="21" height="10.500" fill="#48a428"/><text class="l" x="483" y="499">String Synth</text>
<rect x="494" y="494.500" width="21" height="10.500" fill="#68a820"/><text class="l" x="504" y="499">Synth Bass</text>
<rect x="515" y="494.500" width="21" height="10.500" fill="#90a820"/><text class="l" x="525" y="499">Analog Brass</text>
<rect x="536" y="494.500" width="21" height="10.500" fill="#b0a818"/><text class="l" x="546" y="499">Cell Lead</text>
<rect x="557" y="494.500" width="21" height="10.500" fill="#c09818"/><text class="l" x="567" y="499">String Synth</text>
<rect x="578" y="494.500" width="21" height="10.500" fill="#c07a1a"/><text class="l" x="588" y="499">Analog Synth</text><text class="l" x="588" y="503">Bass</text>
<rect x="599" y="494.500" width="21" height="10.500" fill="#c05a1a"/><text class="l" x="609" y="499">Analog Brass</text>
<rect x="620" y="494.500" width="21.500" height="10.500" fill="#c8401a"/><text class="l" x="631" y="499">Cell Lead</text>
<rect x="641.500" y="494.500" width="21.200" height="10.500" fill="#c8601a"/><text class="l" x="652" y="499">String Synth</text>
<rect x="662.700" y="494.500" width="21.200" height="10.500" fill="#c87f1a"/><text class="l" x="673" y="499">Analog Synth</text><text class="l" x="673" y="503">Bass</text>
<rect x="683.900" y="494.500" width="21.200" height="10.500" fill="#c8a01a"/><text class="l" x="694" y="499">Analog Brass</text>
<rect x="705.100" y="494.500" width="21.400" height="10.500" fill="#b8b81a"/><text class="l" x="716" y="499">Stereo Piano</text>
</g>

<!-- ChromaGlow plugin -->
<rect x="355" y="105" width="263" height="132" rx="1.500" fill="#1a1a1c"/>
<rect x="355" y="113" width="263" height="114" fill="url(#pp)"/>
<rect x="355" y="113" width="263" height="114" fill="url(#pr)"/>
<rect x="356.500" y="107.500" width="3" height="3" fill="#ddd"/><rect x="611" y="107" width="4" height="3.500" fill="none" stroke="#999" stroke-width=".6"/>
<text x="486.500" y="110.500" fill="#bdbdbd" font-size="3.600" text-anchor="middle">Drum Bulletin: Warm Up</text>
<rect x="365" y="122" width="45" height="18" rx="1" fill="#1b1545"/>
<text class="pg" x="373" y="128">Model</text><text x="369" y="135.500" fill="#e8b060" font-size="5" font-weight="bold">Magnetic</text><text class="pg" x="396" y="135.500">◇</text>
<text class="pg" x="433" y="128">Style</text><text class="pw" x="430" y="135.500">Clean</text>
<circle cx="505" cy="131" r="1.800" fill="none" stroke="#8a8ab0" stroke-width=".7"/>
<text class="pg" x="524" y="128">Bypass Below</text><text class="pw" x="524" y="135.500">120 Hz</text>
<text class="pg" x="559" y="128">Level In</text><text class="pw" x="559" y="135.500">0.0 dB</text>
<text class="pg" x="580" y="128">Level Out</text><text class="pw" x="580" y="135.500">0.0 dB</text>
<text class="pg" x="603" y="128">Mix</text><text class="pw" x="603" y="135.500">100 %</text>
<text class="pg" x="486.500" y="144.500">Drive</text><text x="486.500" y="150" fill="#d8c8e8" font-size="4" text-anchor="middle">76 %</text>

<g id="pw1" fill="none" stroke-linejoin="round">
<path d="M360 166L372 165L376 162L379 168L383 163L386 170L390 157L393 173L396 155L399 172L403 160L406 176L410 154L413 170L417 158L420 178L424 152L428 174L431 160L435 172L439 155L442 172L446 158L449 168L454 162L462 166" stroke="url(#wg)" stroke-width=".8"/>
<path d="M378 167L384 160L388 176L392 159L398 178L402 163L407 171L411 159L416 180L421 158L426 177L430 156L436 178L440 160L445 174L450 166" stroke="url(#wh)" stroke-width=".7"/>
<path d="M395 170L399 152L403 176L409 160L414 151L418 172L422 158L428 180L434 162L438 176" stroke="#d8b4d8" stroke-width=".6" stroke-opacity=".75"/>
</g>
<use href="#pw1" x="150"/>
<circle cx="486.500" cy="166" r="10.500" fill="#2b2858"/>
<path d="M477 174A12 12 0 1 1 496 174" fill="none" stroke="#e8b070" stroke-width="1.100"/>
<path d="M492 164l5-2.500" stroke="#ccc" stroke-width=".7"/>

<circle cx="366" cy="200" r="2" fill="none" stroke="#c8c4e0" stroke-width=".8"/><text x="373" y="202" fill="#7d7ba8" font-size="4.600">Low Cut</text>
<circle cx="494.500" cy="200" r="2" fill="none" stroke="#c8c4e0" stroke-width=".8"/><text x="502" y="202" fill="#7d7ba8" font-size="4.600">High Cut</text>
<text class="pg" x="377" y="214">Slope</text><text class="pg" x="377" y="219.500" font-size="3.800">24 dB/Oct</text>
<text class="pg" x="405" y="214">Frequency</text><text class="pg" x="405" y="219.500" font-size="3.800">500 Hz</text>
<text class="pg" x="432" y="214">Resonance</text><text class="pg" x="432" y="219.500" font-size="3.800">0.71</text>
<rect x="450" y="211" width="15" height="10" rx="1" fill="#454370"/><text class="pw" x="457" y="217.500">Pre</text><rect x="467" y="211" width="13" height="10" rx="1" fill="#221a52"/><text class="pg" x="473" y="217.500">Post</text>
<text class="pg" x="506" y="214">Slope</text><text class="pg" x="506" y="219.500" font-size="3.800">24 dB/Oct</text>
<text class="pg" x="533" y="214">Frequency</text><text class="pg" x="533" y="219.500" font-size="3.800">4800 Hz</text>
<text class="pg" x="561" y="214">Resonance</text><text class="pg" x="561" y="219.500" font-size="3.800">0.71</text>
<rect x="578" y="211" width="16" height="10" rx="1" fill="#454370"/><text class="pw" x="586" y="217.500">Pre</text><rect x="596" y="211" width="12" height="10" rx="1" fill="#221a52"/><text class="pg" x="602" y="217.500">Post</text>
<text x="486.500" y="233.500" fill="#8a8a8a" font-size="5" text-anchor="middle">ChromaGlow</text>

<!-- ChromaVerb plugin -->
<rect x="355" y="252" width="263" height="189" rx="1.500" fill="#18191c"/>
<rect x="355" y="258" width="263" height="117" fill="#14161b"/>
<rect x="356.500" y="254" width="3" height="3" fill="#ddd"/><rect x="611" y="253.500" width="4" height="3" fill="none" stroke="#999" stroke-width=".6"/>
<text x="486.500" y="257" fill="#c0c0c0" font-size="3.600" text-anchor="middle">Mod Hall: Orchestra Chamber</text>
<text x="380" y="269" fill="#5f6268" font-size="4" text-anchor="middle">DAMPING EQ</text>
<rect x="461" y="262" width="51" height="10" fill="#2a1a15"/><text x="486.500" y="269.500" fill="#c24d2c" font-size="5.600" text-anchor="middle">Chamber</text>
<rect x="553" y="262" width="52" height="10" fill="#1d1e22"/><text x="566" y="269" fill="#d8603a" font-size="3.800" text-anchor="middle">MAIN</text><text x="592" y="269" fill="#85878c" font-size="3.800" text-anchor="middle">DETAILS</text>
<rect x="360" y="278" width="253" height="86" fill="#1a1f25"/>
<path d="M360 280H613M360 294H613M360 308H613M360 322H613M360 336H613M360 350H613" stroke="#2a2f35" stroke-width=".5"/>
<path d="M375 278V362M395 278V362M415 278V362M435 278V362M455 278V362M475 278V362M495 278V362M515 278V362M535 278V362M555 278V362M575 278V362M595 278V362" stroke="#252a30" stroke-width=".5"/>
<path d="M370 294H605" stroke="#56626c" stroke-width=".8"/>
<path d="M367 338L395 334H417L430 328L447 315L477 305L517 310L550 322L570 340L590 345L606 346V360H367Z" fill="url(#rb)" filter="url(#sp)"/>
<path d="M372 318C395 318 410 318 420 316C435 312 445 305 452 299C465 290 476 288 487 288C500 289 512 291 524 294C538 296 548 302 558 307C570 314 585 320 602 321" fill="none" stroke="#d4774f" stroke-width=".8"/>
<g fill="#d8d8d8"><circle cx="442" cy="306" r="1.100"/><circle cx="487" cy="288" r="1.100"/><circle cx="524" cy="294" r="1.100"/><circle cx="558" cy="307" r="1.100"/></g>
<rect x="597" y="367" width="7" height="6" rx="1" fill="#2a1a15"/>

<rect x="355" y="375" width="263" height="57" fill="#e9e9e9"/>
<path d="M459 378V428M512 378V428M558 378V428" stroke="#d5d5d5" stroke-width=".6"/>
<g font-size="3.800" fill="#555" text-anchor="middle">
<text x="378" y="385">Attack</text><text x="409" y="385">Size</text><text x="440" y="385">Density</text><text x="486" y="385">Decay</text><text x="535" y="385">Distance</text><text x="575" y="385">Dry</text><text x="601" y="385">Wet</text><text x="385" y="421">Predelay</text>
</g>
<text class="o" x="378" y="391">0 %</text><text class="o" x="409" y="391">59 %</text><text class="o" x="440" y="391">32 %</text><text class="o" x="486" y="391">2.90 s</text><text class="o" x="535" y="391">59 %</text><text class="o" x="575" y="391">0 %</text><text class="o" x="601" y="391">100 %</text><text class="o" x="385" y="426">8 ms</text>
<rect x="365" y="417" width="9" height="7" rx="1" fill="#fafafa"/><text x="369.500" y="422.500" font-size="4.500" fill="#555" text-anchor="middle">♩</text>
<rect x="466" y="381" width="9" height="7" rx="1" fill="#fafafa"/><text x="470.500" y="386.500" font-size="4.500" fill="#555" text-anchor="middle">♩</text>

<g fill="url(#kn)"><circle cx="378" cy="403" r="8"/><circle cx="409" cy="403" r="8"/><circle cx="440" cy="403" r="8"/><circle cx="486" cy="405" r="10"/><circle cx="535" cy="403" r="8"/></g>
<g fill="none" stroke-width="1">
<circle cx="378" cy="403" r="9" stroke="#9e9e9e" stroke-width=".8" stroke-dasharray="43 14" transform="rotate(135 378 403)"/>
<path d="M402 410.100A10 10 0 1 1 416 410.100" stroke="#e55a32" stroke-width="1.300"/>
<path d="M433.600 409.400A9 9 0 0 1 435 395.500" stroke="#e55a32" stroke-width="1.300"/><path d="M435 395.500A9 9 0 0 1 446.400 409.400" stroke="#9e9e9e"/>
<path d="M478.200 412.800A11 11 0 1 1 497 405" stroke="#e55a32" stroke-width="1.500"/><path d="M497 405A11 11 0 0 1 493.800 412.800" stroke="#9e9e9e"/>
<path d="M528.600 409.400A9 9 0 1 1 541 396.300" stroke="#e55a32" stroke-width="1.300"/><path d="M541 396.300A9 9 0 0 1 541.400 409.400" stroke="#9e9e9e"/>
</g>
<g stroke="#e8906e" stroke-width=".8"><path d="M378 405l-4 4"/><path d="M411 405l4 4"/><path d="M438 401l-4-3"/><path d="M489 402l6-6"/><path d="M537 401l4-5"/></g>
<text x="478" y="421" font-size="3" fill="#666" text-anchor="middle">0.0</text><text x="492" y="421" font-size="3" fill="#666" text-anchor="middle">98</text>
<rect x="478" y="422" width="16" height="7" rx="1" fill="#f5f5f5" stroke="#ccc" stroke-width=".4"/><text x="486" y="427" font-size="3.300" fill="#777" text-anchor="middle">Freeze</text>
<rect x="575" y="393" width="2.200" height="33" fill="#b5b5b5"/><rect x="573" y="424" width="6" height="2" fill="#999"/>
<rect x="600.500" y="393" width="1.200" height="33" fill="#e55a32"/><rect x="598" y="392" width="6" height="1.500" fill="#ddd"/>
<text x="486.500" y="438" fill="#7e7e7e" font-size="5" text-anchor="middle">ChromaVerb</text>
</svg>
</body></html>
